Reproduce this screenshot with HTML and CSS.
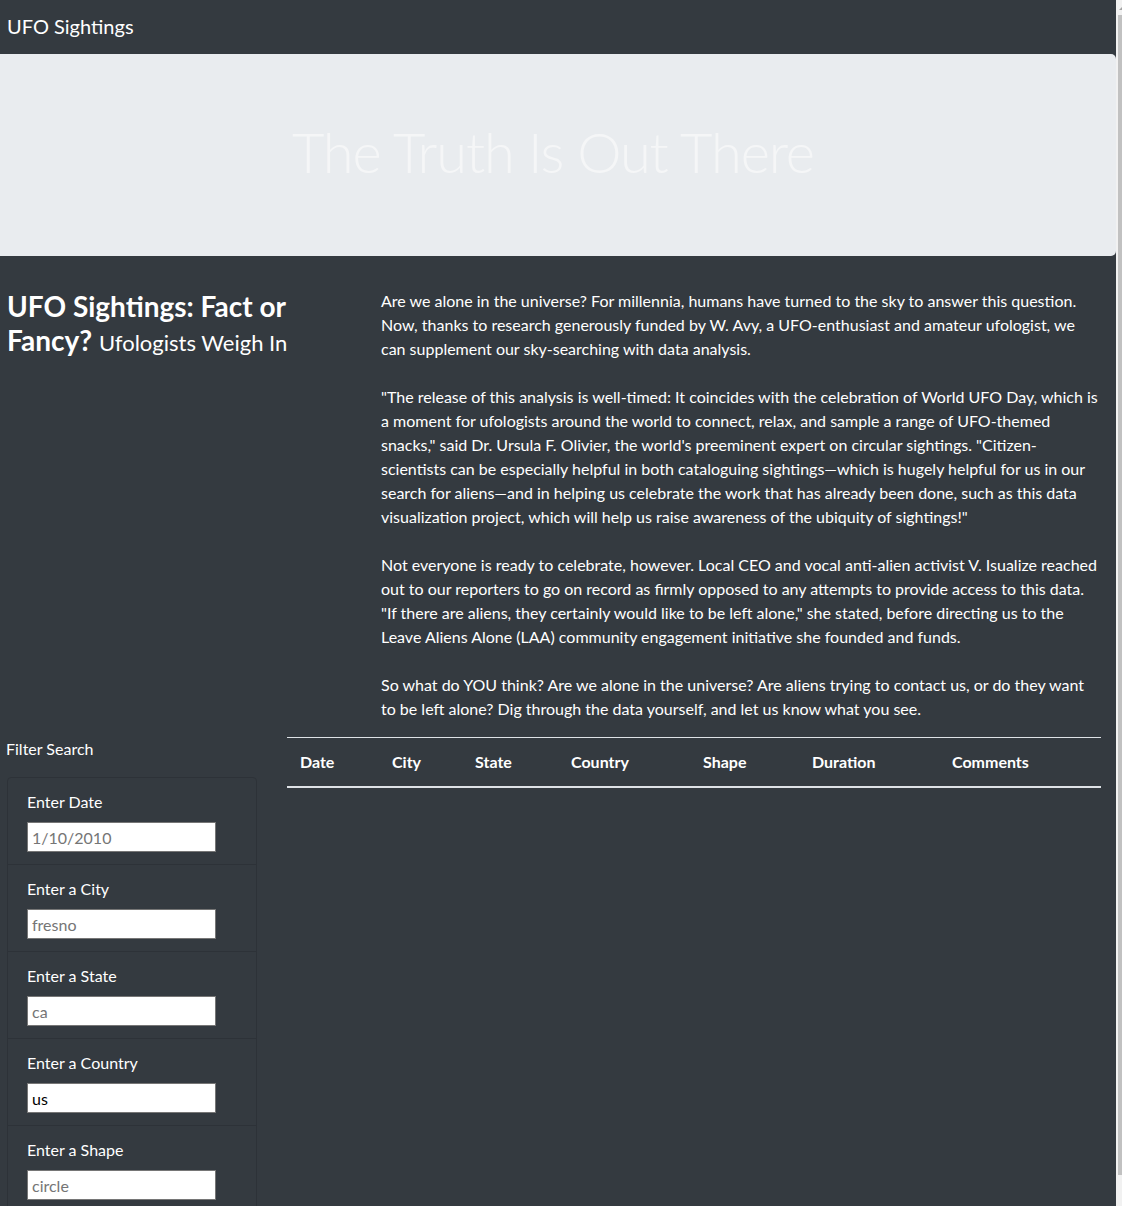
FILE: index.html
```html
<!DOCTYPE html>
<html lang="en">
<head>
<meta charset="utf-8">
<title>UFO Sightings</title>
<link rel="stylesheet" href="styles.css">
</head>
<body>
<div class="page">
  <nav class="navbar">
    <a class="brand" href="#">UFO Sightings</a>
  </nav>
  <header class="hero">
    <h1 class="hero-title">The Truth Is Out There</h1>
  </header>
  <section class="article">
    <div class="article-head">
      <h3 class="headline">UFO Sightings: Fact or Fancy? <small>Ufologists Weigh In</small></h3>
    </div>
    <div class="article-body">
      <p>Are we alone in the universe? For millennia, humans have turned to the sky to answer this question. Now, thanks to research generously funded by W. Avy, a UFO-enthusiast and amateur ufologist, we can supplement our sky-searching with data analysis.</p>
      <p>"The release of this analysis is well-timed: It coincides with the celebration of World UFO Day, which is a moment for ufologists around the world to connect, relax, and sample a range of UFO-themed snacks," said Dr. Ursula F. Olivier, the world's preeminent expert on circular sightings. "Citizen-scientists can be especially helpful in both cataloguing sightings—which is hugely helpful for us in our search for aliens—and in helping us celebrate the work that has already been done, such as this data visualization project, which will help us raise awareness of the ubiquity of sightings!"</p>
      <p>Not everyone is ready to celebrate, however. Local CEO and vocal anti-alien activist V. Isualize reached out to our reporters to go on record as firmly opposed to any attempts to provide access to this data. "If there are aliens, they certainly would like to be left alone," she stated, before directing us to the Leave Aliens Alone (LAA) community engagement initiative she founded and funds.</p>
      <p>So what do YOU think? Are we alone in the universe? Are aliens trying to contact us, or do they want to be left alone? Dig through the data yourself, and let us know what you see.</p>
    </div>
  </section>
  <section class="data">
    <aside class="filters">
      <div class="filters-title">Filter Search</div>
      <ul class="filter-list">
        <li class="filter-item">
          <label class="filter-label" for="datetime">Enter Date</label>
          <input class="filter-input" id="datetime" type="text" placeholder="1/10/2010">
        </li>
        <li class="filter-item">
          <label class="filter-label" for="city">Enter a City</label>
          <input class="filter-input" id="city" type="text" placeholder="fresno">
        </li>
        <li class="filter-item">
          <label class="filter-label" for="state">Enter a State</label>
          <input class="filter-input" id="state" type="text" placeholder="ca">
        </li>
        <li class="filter-item">
          <label class="filter-label" for="country">Enter a Country</label>
          <input class="filter-input" id="country" type="text" value="us">
        </li>
        <li class="filter-item">
          <label class="filter-label" for="shape">Enter a Shape</label>
          <input class="filter-input" id="shape" type="text" placeholder="circle">
        </li>
      </ul>
    </aside>
    <div class="results">
      <table class="ufo-table">
        <thead>
          <tr>
            <th class="col-date">Date</th>
            <th class="col-city">City</th>
            <th class="col-state">State</th>
            <th class="col-country">Country</th>
            <th class="col-shape">Shape</th>
            <th class="col-duration">Duration</th>
            <th class="col-comments">Comments</th>
          </tr>
        </thead>
        <tbody></tbody>
      </table>
    </div>
  </section>
</div>
<div class="scrollbar"><div class="scroll-arrow"></div><div class="scroll-thumb"></div></div>
</body>
</html>
```
FILE: styles.css
```css
html {
  overflow: hidden;
}
body {
  margin: 0;
  background: #343a40;
  color: #fff;
  font-family: Lato, "Noto Sans", sans-serif;
  font-size: 16px;
  line-height: 1.5;
}
.page {
  width: 1116px;
}

/* navbar */
.navbar {
  height: 54px;
  display: flex;
  align-items: center;
  padding-left: 7px;
}
.brand {
  color: #fff;
  text-decoration: none;
  font-size: 20px;
  line-height: 30px;
  margin-top: -3px;
}

/* hero */
.hero {
  height: 202px;
  background: #e9ecef;
  border-radius: 0 5px 5px 0;
  display: flex;
  align-items: center;
  justify-content: center;
}
.hero-title {
  margin: 0 0 6px -10px;
  font-size: 56px;
  font-weight: 300;
  letter-spacing: -1.1px;
  line-height: 1.2;
  color: #f5f6f7;
}

/* article */
.article {
  display: flex;
  padding-top: 33px;
}
.article-head {
  width: 359px;
  padding-left: 7px;
  flex: none;
}
.headline {
  margin: 0;
  width: 320px;
  font-size: 28px;
  font-weight: 700;
  line-height: 34px;
}
.headline small {
  font-size: 22px;
  font-weight: 400;
  line-height: 1;
}
.article-body {
  width: 720px;
  margin-left: 15px;
}
.article-body p {
  margin: 0 0 24px;
}
.article-body p:last-child {
  margin-bottom: 0;
}

/* data section */
.data {
  display: flex;
  margin-top: 16px;
  align-items: flex-start;
}
.filters {
  width: 250px;
  margin-left: 7px;
  flex: none;
}
.filters-title {
  margin-left: -1px;
  line-height: 24px;
  margin-bottom: 16px;
}
.filter-list {
  list-style: none;
  margin: 0;
  padding: 0;
  border: 1px solid #2d3238;
  border-radius: 4px 4px 0 0;
}
.filter-item {
  padding: 12px 19px;
  border-top: 1px solid #2d3238;
}
.filter-item:first-child {
  border-top: none;
}
.filter-label {
  display: block;
  line-height: 24px;
  margin-bottom: 8px;
}
.filter-input {
  display: block;
  box-sizing: border-box;
  width: 189px;
  height: 30px;
  margin: 0;
  padding: 0 4px;
  border: 1px solid #767676;
  border-radius: 0;
  background: #fff;
  color: #000;
  font-family: Lato, "Noto Sans", sans-serif;
  font-size: 16px;
}
.filter-input::placeholder {
  color: #757575;
}

.results {
  margin-left: 30px;
  width: 814px;
}
.ufo-table {
  width: 814px;
  border-collapse: collapse;
  table-layout: fixed;
}
.ufo-table th {
  box-sizing: border-box;
  text-align: left;
  font-weight: 700;
  padding: 12px 12px 12px 13px;
  line-height: 24px;
  border-top: 1px solid #dee2e6;
  border-bottom: 2px solid #dee2e6;
}
.col-date { width: 92px; }
.col-city { width: 83px; }
.col-state { width: 96px; }
.col-country { width: 132px; }
.col-shape { width: 109px; }
.col-duration { width: 140px; }
.col-comments { width: 162px; }

/* fake scrollbar strip at the right edge */
.scrollbar {
  position: fixed;
  top: 0;
  right: 0;
  width: 6px;
  height: 100%;
  background: #f1f1f1;
}
.scroll-arrow {
  position: absolute;
  top: 6px;
  left: 3px;
  width: 0;
  height: 0;
  border-left: 4px solid transparent;
  border-right: 4px solid transparent;
  border-bottom: 4px solid #a3a3a3;
}
.scroll-thumb {
  position: absolute;
  top: 15px;
  left: 2px;
  right: 0;
  bottom: 31px;
  background: #c1c1c1;
}
```
